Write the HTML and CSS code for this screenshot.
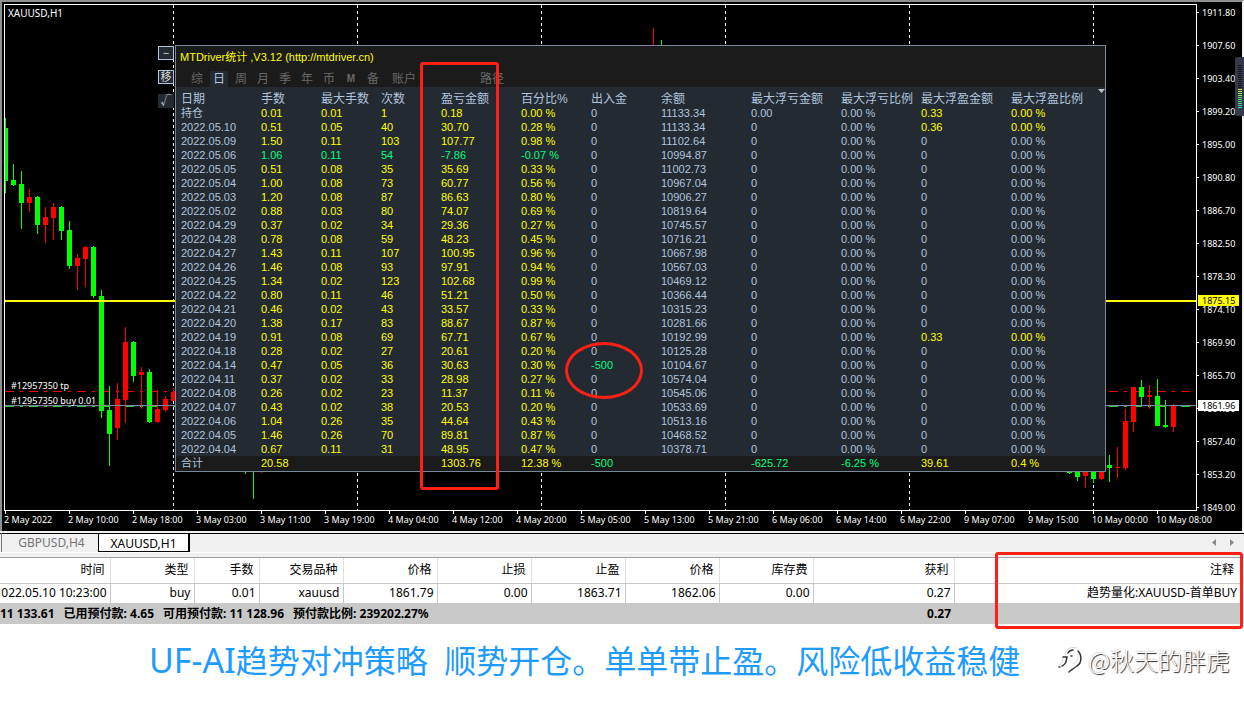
FILE: index.html
```
<!DOCTYPE html>
<html lang="zh-CN">
<head>
    <meta charset="UTF-8">
    <meta name="viewport" content="width=device-width, initial-scale=1.0">
    <title>XAUUSD,H1</title>
    <link rel="stylesheet" href="styles.css">
</head>
<body>
    <main class="terminal">
        <section class="chart">
            <div class="plot">
                <svg class="plot-svg" id="plot" width="100%" height="507"></svg>
                <h1 class="symbol">XAUUSD,H1</h1>
                <span class="order order-tp">#12957350 tp</span>
                <span class="order order-buy">#12957350 buy 0.01</span>
            </div>
            <ul class="prices" id="prices"></ul>
            <ul class="times" id="times"></ul>
            <span class="tag tag-yellow">1875.15</span>
            <span class="tag tag-white">1861.96</span>
        </section>

        <div class="side-buttons">
            <button class="boxed">−</button>
            <button class="boxed">移</button>
            <button>√</button>
        </div>

        <section class="panel">
            <header class="panel-head">
                <h2>MTDriver统计 ,V3.12 (http://mtdriver.cn)</h2>
                <nav class="periods">
                    <button>综</button>
                    <button class="active">日</button>
                    <button>周</button>
                    <button>月</button>
                    <button>季</button>
                    <button>年</button>
                    <button>币</button>
                    <button class="latin">M</button>
                    <button>备</button>
                    <button class="wide">账户</button>
                    <button class="path">路径</button>
                </nav>
            </header>
            <table class="stats">
                <colgroup>
                    <col class="w80"><col class="w60"><col class="w60"><col class="w60">
                    <col class="w80"><col class="w70"><col class="w70"><col class="w90">
                    <col class="w90"><col class="w80"><col class="w90"><col>
                </colgroup>
                <thead>
                    <tr>
                        <th>日期</th><th>手数</th><th>最大手数</th><th>次数</th>
                        <th>盈亏金额</th><th>百分比%</th><th>出入金</th><th>余额</th>
                        <th>最大浮亏金额</th><th>最大浮亏比例</th><th>最大浮盈金额</th><th>最大浮盈比例</th>
                    </tr>
                </thead>
                <tbody id="days"></tbody>
                <tfoot>
                    <tr>
                        <td>合计</td><td class="up">20.58</td><td></td><td></td>
                        <td class="up">1303.76</td><td class="up">12.38 %</td><td class="down">-500</td><td></td>
                        <td class="down">-625.72</td><td class="down">-6.25 %</td><td class="up">39.61</td><td class="up">0.4 %</td>
                    </tr>
                </tfoot>
            </table>
            <svg class="shift" width="7" height="5"><path d="M0 1H7L3.500 5Z" fill="#c0c0c0"/></svg>
        </section>

        <div class="meter"><i></i></div>

        <div class="tabs">
            <button>GBPUSD,H4</button>
            <button class="active">XAUUSD,H1</button>
            <span class="arrows">
                <button aria-label="prev"><svg width="4" height="7"><path d="M4 0V7L0 3.500Z" fill="#888"/></svg></button>
                <button aria-label="next"><svg width="4" height="7"><path d="M0 0V7L4 3.500Z" fill="#888"/></svg></button>
            </span>
        </div>

        <table class="trades">
            <colgroup>
                <col class="t-time"><col class="t-type"><col class="t-lots"><col class="t-type">
                <col class="t-price"><col class="t-price"><col class="t-price"><col class="t-price"><col class="t-price">
                <col class="t-profit"><col>
            </colgroup>
            <thead>
                <tr>
                    <th>时间</th><th>类型</th><th>手数</th><th>交易品种</th><th>价格</th><th>止损</th>
                    <th>止盈</th><th>价格</th><th>库存费</th><th>获利</th><th>注释</th>
                </tr>
            </thead>
            <tbody>
                <tr>
                    <td>022.05.10 10:23:00</td><td>buy</td><td>0.01</td><td>xauusd</td><td>1861.79</td><td>0.00</td>
                    <td>1863.71</td><td>1862.06</td><td>0.00</td><td>0.27</td><td>趋势量化:XAUUSD-首单BUY</td>
                </tr>
            </tbody>
            <tfoot>
                <tr>
                    <td colspan="9">
                        <div class="account">
                            <span>11 133.61</span>
                            <span>已用预付款: 4.65</span>
                            <span>可用预付款: 11 128.96</span>
                            <span>预付款比例: 239202.27%</span>
                        </div>
                    </td>
                    <td>0.27</td>
                    <td></td>
                </tr>
            </tfoot>
        </table>

        <div class="mark mark-profit"></div>
        <div class="mark mark-withdraw"></div>
        <div class="mark mark-comment"></div>
    </main>

    <footer class="caption">
        <p class="slogan"><span class="brand">UF-AI</span>趋势对冲策略&nbsp; 顺势开仓。单单带止盈。风险低收益稳健</p>
        <p class="author">
            <svg width="24" height="28" viewBox="0 0 24 28" fill="none" stroke-linecap="round">
                <g stroke="#d8d8d8" stroke-width="1">
                    <path d="M7 9C8 3 13 0 19 2"/>
                    <path d="M1 19C4 18 5 15 5 12"/>
                    <path d="M20 8C21 12 19 17 15 18"/>
                </g>
                <g stroke="#333" stroke-width="1.500">
                    <path d="M10 7C11 5 12 4 15 4"/>
                    <path d="M5 11H9C8 16 8 18 4 20M1 21H2"/>
                    <path d="M20 5C24 9 24 17 19 20C16 22 15 23 12 25L11 26"/>
                    <path d="M13 10H14"/>
                </g>
            </svg>
            <span>@秋天的胖虎</span>
        </p>
    </footer>

    <script src="app.js"></script>
</body>
</html>
```
FILE: styles.css
```
* {
    box-sizing: border-box;
}
body {
    margin: 0;
    background: #fff;
    color: #000;
    font-family: "Noto Sans", "Noto Sans CJK SC", sans-serif;
    font-size: 12px;
}
h1, h2, p, ul {
    margin: 0;
    padding: 0;
    font-weight: 400;
    list-style: none;
}
button {
    margin: 0;
    padding: 0;
    border: 0;
    background: none;
    color: inherit;
    font: inherit;
    cursor: pointer;
}
.terminal {
    position: relative;
    overflow: hidden;
    padding-bottom: 5px;
}

/* chart */
.chart {
    position: relative;
    display: grid;
    grid-template-columns: 1fr 45px;
    border: 2px solid #909090;
    border-right: 2px solid #f0f0f0;
    border-bottom: 0;
    padding: 2px 0 0 2px;
    background: #000;
    color: #fff;
    font-size: 9px;
}
.plot {
    position: relative;
    border: 1px solid #fff;
    height: 507px;
    overflow: hidden;
}
.plot-svg {
    display: block;
}
.symbol {
    position: absolute;
    left: 3px;
    top: 1px;
    font-size: 10px;
    line-height: 14px;
}
.order {
    position: absolute;
    left: 6px;
    line-height: 12px;
}
.order-tp {
    top: 375px;
}
.order-buy {
    top: 390px;
}
.prices {
    display: flex;
    flex-direction: column;
    gap: 20px;
    padding-top: 2px;
    height: 507px;
}
.prices li {
    display: flex;
    align-items: center;
    gap: 3px;
    height: 13px;
    line-height: 13px;
}
.prices li::before {
    content: "";
    width: 2px;
    height: 1px;
    background: #fff;
}
.times {
    grid-column: 1 / -1;
    display: flex;
    height: 20px;
    overflow: hidden;
}
.times li {
    flex: 0 0 64px;
    line-height: 12px;
    white-space: nowrap;
}
.times li::before {
    content: "";
    display: block;
    width: 1px;
    height: 3px;
    margin-left: 1px;
    background: #fff;
}
.tag {
    position: absolute;
    right: 3px;
    width: 41px;
    padding-left: 4px;
    line-height: 11px;
    color: #000;
}
.tag-yellow {
    top: 293px;
    background: #ff0;
}
.tag-white {
    top: 398px;
    background: #fff;
}

/* statistics window */
.side-buttons {
    position: absolute;
    left: 158px;
    top: 46px;
    display: flex;
    flex-direction: column;
    gap: 10px;
}
.side-buttons button {
    display: flex;
    align-items: center;
    justify-content: center;
    width: 16px;
    height: 14px;
    background: #242a32;
    color: #ddd;
    font-size: 11px;
    line-height: 12px;
}
.side-buttons .boxed {
    border: 1px solid #b0c4de;
}
.panel {
    position: absolute;
    left: 175px;
    top: 45px;
    width: 931px;
    border: 1px solid #778899;
    background: #242a32;
    color: #b0c4de;
    font-family: "Liberation Sans", "Noto Sans CJK SC", sans-serif;
    font-size: 11px;
}
.panel-head {
    height: 41px;
    padding: 2px 4px;
    background: #1b1b1b;
}
.panel-head h2 {
    color: #ff0;
    font-size: 11px;
    line-height: 18px;
}
.periods {
    display: flex;
    padding: 5px 0 0 8px;
    gap: 4px;
    color: #696969;
    font-size: 12px;
}
.periods button {
    width: 18px;
    height: 16px;
    line-height: 16px;
}
.periods .active {
    background: #242a32;
    color: #b0c4de;
}
.periods .latin {
    font-size: 10px;
    font-weight: 700;
}
.periods .wide {
    width: 36px;
}
.periods .path {
    width: 36px;
    margin-left: 48px;
}
.stats {
    width: 100%;
    table-layout: fixed;
    border-collapse: collapse;
}
.w60 { width: 60px; }
.w70 { width: 70px; }
.w80 { width: 80px; }
.w90 { width: 90px; }
.stats th,
.stats td {
    height: 14px;
    padding: 0 0 0 5px;
    line-height: 14px;
    text-align: left;
    font-weight: 400;
    white-space: nowrap;
}
.stats th {
    height: 19px;
    padding-top: 5px;
    font-size: 12px;
}
.stats tfoot {
    background: #1b1b1b;
}
.stats tfoot td {
    height: 15px;
    line-height: 15px;
}
.up {
    color: #ff0;
}
.down {
    color: #00ff7f;
}
.shift {
    position: absolute;
    right: 0;
    top: 42px;
}

/* volume meter on the screen edge */
.meter {
    position: absolute;
    right: 0;
    top: 57px;
    width: 9px;
    height: 59px;
    padding: 7px 2px 7px 3px;
    border-radius: 3px 0 0 3px;
    background: #343a4c;
}
.meter i {
    display: block;
    height: 100%;
    background:
        repeating-linear-gradient(#343a4c 0 1px, transparent 1px 2px),
        linear-gradient(#15171f 0 24px, #d8ec30 24px, #50e870 34px, #20d8b8);
}

/* chart tabs */
.tabs {
    display: flex;
    height: 27px;
    padding-left: 1px;
    border-top: 2px solid #f0f0f0;
    border-bottom: 1px solid #a0a0a0;
    background: linear-gradient(#000 0 1px, #f0f0f0 1px 19px, #fff 19px 20px, #f0f0f0 20px);
    color: #777;
}
.tabs button {
    width: 97px;
    height: 19px;
    padding-left: 3px;
    border-left: 1px solid #777;
    line-height: 20px;
}
.tabs .active {
    width: 92px;
    padding: 0;
    border: 1px solid #000;
    border-right-width: 2px;
    background: #fff;
    color: #000;
}
.arrows {
    display: flex;
    align-items: center;
    gap: 14px;
    height: 18px;
    margin-left: auto;
    padding-right: 10px;
}
.tabs .arrows button {
    display: flex;
    width: auto;
    height: auto;
    padding: 0;
    border: 0;
}

/* open trades */
.trades {
    width: 100%;
    table-layout: fixed;
    border-collapse: collapse;
    border-right: 2px solid #f0f0f0;
}
.t-time { width: 110px; }
.t-type { width: 84px; }
.t-lots { width: 65px; }
.t-price { width: 94px; }
.t-profit { width: 141px; }
.trades th,
.trades td {
    height: 20px;
    padding: 0 3px 0 0;
    border-right: 1px solid #c8c8c8;
    text-align: right;
    white-space: nowrap;
    line-height: 18px;
}
.trades th {
    height: 25px;
    padding-right: 5px;
    border-color: #e0e0e0;
    border-bottom: 1px solid #c8c8c8;
    font-weight: 400;
}
.trades td:last-child {
    padding-right: 5px;
}
.trades th:last-child {
    padding-right: 8px;
}
.trades tfoot td {
    height: 21px;
    border: 0;
    background: #c8c8c8;
    font-weight: 700;
}
.account {
    display: flex;
    gap: 9px;
}

/* red marker drawings */
.mark {
    position: absolute;
    border: 3px solid #ff2015;
    border-radius: 3px;
}
.mark-profit {
    left: 420px;
    top: 62px;
    width: 79px;
    height: 428px;
}
.mark-withdraw {
    left: 565px;
    top: 342px;
    width: 78px;
    height: 57px;
    border-radius: 50%;
}
.mark-comment {
    right: 1px;
    top: 552px;
    width: 248px;
    height: 77px;
}

/* caption */
.caption {
    display: flex;
    align-items: center;
    padding: 6px 14px 0 149px;
    white-space: nowrap;
}
.slogan {
    color: #1e9bff;
    font-size: 32px;
    line-height: 50px;
}
.brand {
    font-size: 34px;
}
.author {
    display: flex;
    align-items: center;
    gap: 6px;
    margin-left: auto;
    padding-bottom: 2px;
    color: #fff;
    font-family: "Noto Sans CJK SC", sans-serif;
    font-size: 24px;
    font-weight: 300;
    line-height: 42px;
    text-shadow: 1px 1px 1px #222, -1px -1px 1px #ddd;
}
```
FILE: app.js
```
// date, lots, max lots, trades, profit, percent, balance
const days = [
    ['持仓', '0.01', '0.01', 1, '0.18', '0.00', '11133.34'],
    ['2022.05.10', '0.51', '0.05', 40, '30.70', '0.28', '11133.34'],
    ['2022.05.09', '1.50', '0.11', 103, '107.77', '0.98', '11102.64'],
    ['2022.05.06', '1.06', '0.11', 54, '-7.86', '-0.07', '10994.87'],
    ['2022.05.05', '0.51', '0.08', 35, '35.69', '0.33', '11002.73'],
    ['2022.05.04', '1.00', '0.08', 73, '60.77', '0.56', '10967.04'],
    ['2022.05.03', '1.20', '0.08', 87, '86.63', '0.80', '10906.27'],
    ['2022.05.02', '0.88', '0.03', 80, '74.07', '0.69', '10819.64'],
    ['2022.04.29', '0.37', '0.02', 34, '29.36', '0.27', '10745.57'],
    ['2022.04.28', '0.78', '0.08', 59, '48.23', '0.45', '10716.21'],
    ['2022.04.27', '1.43', '0.11', 107, '100.95', '0.96', '10667.98'],
    ['2022.04.26', '1.46', '0.08', 93, '97.91', '0.94', '10567.03'],
    ['2022.04.25', '1.34', '0.02', 123, '102.68', '0.99', '10469.12'],
    ['2022.04.22', '0.80', '0.11', 46, '51.21', '0.50', '10366.44'],
    ['2022.04.21', '0.46', '0.02', 43, '33.57', '0.33', '10315.23'],
    ['2022.04.20', '1.38', '0.17', 83, '88.67', '0.87', '10281.66'],
    ['2022.04.19', '0.91', '0.08', 69, '67.71', '0.67', '10192.99'],
    ['2022.04.18', '0.28', '0.02', 27, '20.61', '0.20', '10125.28'],
    ['2022.04.14', '0.47', '0.05', 36, '30.63', '0.30', '10104.67'],
    ['2022.04.11', '0.37', '0.02', 33, '28.98', '0.27', '10574.04'],
    ['2022.04.08', '0.26', '0.02', 23, '11.37', '0.11', '10545.06'],
    ['2022.04.07', '0.43', '0.02', 38, '20.53', '0.20', '10533.69'],
    ['2022.04.06', '1.04', '0.26', 35, '44.64', '0.43', '10513.16'],
    ['2022.04.05', '1.46', '0.26', 70, '89.81', '0.87', '10468.52'],
    ['2022.04.04', '0.67', '0.11', 31, '48.95', '0.47', '10378.71']
];
const withdrawals = { '2022.04.14': '-500' };
const maxProfit = { '持仓': '0.33', '2022.05.10': '0.36', '2022.04.19': '0.33' };

const cell = (text, cls) => `<td${cls ? ` class="${cls}"` : ''}>${text}</td>`;

document.getElementById('days').innerHTML = days.map(([date, lots, max, count, profit, pct, balance]) => {
    const cls = profit.startsWith('-') ? 'down' : 'up';
    const out = withdrawals[date];
    const top = maxProfit[date];
    return '<tr>' + cell(date) + cell(lots, cls) + cell(max, cls) + cell(count, cls) +
        cell(profit, cls) + cell(pct + ' %', cls) +
        cell(out || '0', out && 'down') + cell(balance) +
        cell(date === '持仓' ? '0.00' : '0') + cell('0.00 %') +
        cell(top || '0', top && 'up') + cell('0.00 %', top && 'up') + '</tr>';
}).join('');

const prices = ['1911.80', '1907.60', '1903.40', '1899.20', '1895.00', '1890.80', '1886.70', '1882.50',
    '1878.30', '1874.10', '1869.90', '1865.70', '1861.50', '1857.40', '1853.20', '1849.00'];
document.getElementById('prices').innerHTML = prices.map(p => `<li>${p}</li>`).join('');

const times = ['2 May 2022', '2 May 10:00', '2 May 18:00', '3 May 03:00', '3 May 11:00', '3 May 19:00',
    '4 May 04:00', '4 May 12:00', '4 May 20:00', '5 May 05:00', '5 May 13:00', '5 May 21:00',
    '6 May 06:00', '6 May 14:00', '6 May 22:00', '9 May 07:00', '9 May 15:00', '10 May 00:00', '10 May 08:00'];
document.getElementById('times').innerHTML = times.map(t => `<li>${t}</li>`).join('');

// x, wick top, wick bottom, body top, body bottom, colour
const candles = [
    [5, 118, 193, 128, 181, 'g'], [13, 164, 186, 180, 185, 'g'], [21, 171, 229, 184, 203, 'g'],
    [29, 189, 212, 197, 203, 'r'], [37, 196, 234, 197, 225, 'g'], [45, 207, 243, 217, 225, 'r'],
    [53, 203, 240, 207, 218, 'r'], [61, 206, 240, 207, 231, 'g'], [69, 221, 269, 230, 266, 'g'],
    [77, 254, 290, 258, 266, 'r'], [85, 246, 287, 247, 259, 'r'], [93, 246, 298, 247, 296, 'g'],
    [101, 290, 418, 296, 411, 'g'], [109, 386, 466, 410, 434, 'g'], [117, 383, 440, 399, 428, 'r'],
    [125, 327, 423, 342, 400, 'r'], [133, 341, 382, 342, 376, 'g'], [141, 367, 409, 372, 375, 'r'],
    [149, 369, 423, 372, 422, 'g'], [157, 390, 423, 409, 422, 'r'], [165, 396, 412, 399, 410, 'r'],
    [173, 388, 401, 392, 401, 'r'], [245, 460, 474, 460, 470, 'g'], [253, 460, 499, 460, 472, 'g'],
    [261, 460, 473, 460, 472, 'r'], [653, 28, 60, 50, 60, 'r'], [661, 40, 60, 50, 60, 'g'],
    [1069, 460, 474, 460, 473, 'g'], [1077, 460, 481, 472, 477, 'g'], [1085, 460, 488, 460, 476, 'r'],
    [1093, 460, 483, 460, 479, 'g'], [1101, 460, 480, 460, 479, 'r'], [1109, 455, 482, 465, 468, 'g'],
    [1117, 447, 478, 467, 468, 'r'], [1125, 409, 470, 421, 468, 'r'], [1133, 387, 432, 387, 422, 'r'],
    [1141, 380, 405, 387, 397, 'g'], [1149, 385, 409, 395, 397, 'r'], [1157, 379, 426, 396, 426, 'g'],
    [1165, 400, 428, 425, 427, 'g'], [1173, 404, 432, 405, 427, 'r']
];
const colors = { g: '#00ff00', r: '#ff0000' };

let svg = '<g transform="translate(-5 -5)" shape-rendering="crispEdges">';
for (let x = 173; x <= 1093; x += 184) {
    svg += `<path d="M${x}.5 5V510" stroke="#fff" stroke-dasharray="3 3"/>`;
}
svg += '<path d="M5 391.5H1190" stroke="#f00" stroke-dasharray="9 6 3 6"/>';
svg += '<path d="M5 406.500H1190" stroke="#32cd32" stroke-dasharray="9 6 3 6"/>';
candles.forEach(([x, high, low, top, bottom, c]) => {
    svg += `<path d="M${x} ${high}h1V${low}h-1ZM${x - 2} ${top}h5V${bottom}h-5Z" fill="${colors[c]}"/>`;
});
svg += '<path d="M5 301H2000" stroke="#ff0" stroke-width="2"/>';
svg += '<path d="M5 405.500H2000" stroke="#778899"/></g>';
document.getElementById('plot').innerHTML = svg;
```
